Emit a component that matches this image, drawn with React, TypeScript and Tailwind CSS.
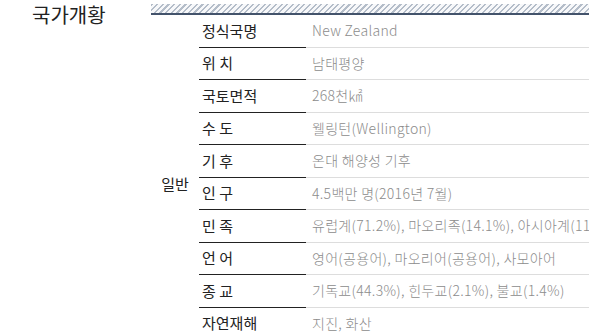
import React from "react";

const rows: { label: string; value: string }[] = [
  { label: "정식국명", value: "New Zealand" },
  { label: "위 치", value: "남태평양" },
  { label: "국토면적", value: "268천㎢" },
  { label: "수 도", value: "웰링턴(Wellington)" },
  { label: "기 후", value: "온대 해양성 기후" },
  { label: "인 구", value: "4.5백만 명(2016년 7월)" },
  { label: "민 족", value: "유럽계(71.2%), 마오리족(14.1%), 아시아계(11.3%), 태평양계(7.6%)" },
  { label: "언 어", value: "영어(공용어), 마오리어(공용어), 사모아어" },
  { label: "종 교", value: "기독교(44.3%), 힌두교(2.1%), 불교(1.4%)" },
  { label: "자연재해", value: "지진, 화산" },
];

const App: React.FC = () => {
  return (
    <div
      className="w-[589px] h-[335px] overflow-hidden bg-white flex"
      style={{ fontFamily: '"Noto Sans CJK KR", "Noto Sans", sans-serif' }}
    >
      <div className="w-[151px] shrink-0 pl-[32px] pt-[2px]">
        <h2 className="text-[20px] leading-[26px] text-[#222]">국가개황</h2>
      </div>

      <div className="flex-1 min-w-0 flex flex-col">
        <div className="shrink-0 mt-[4px] h-[11px] border-b-2 border-[#43536b] bg-[repeating-linear-gradient(135deg,#b4bdc9_0px,#b4bdc9_1.5px,#f7f8fa_1.5px,#f7f8fa_4px)]" />

        <div className="shrink-0 flex">
          <div className="w-[48px] shrink-0 flex items-center justify-center pt-[13px]">
            <span className="text-[15px] text-[#222]">일반</span>
          </div>
          <div className="flex-1 min-w-0">
            {rows.map((row) => (
              <div key={row.label} className="flex h-[32.5px]">
                <div className="w-[107px] shrink-0 border-b border-[#222] pl-[3px] flex items-center text-[15px] text-[#222] whitespace-nowrap">
                  {row.label}
                </div>
                <div className="flex-1 min-w-0 border-b border-[#ddd] pl-[6px] flex items-center text-[14px] font-light tracking-[0.3px] text-[#8c8c8c] whitespace-nowrap overflow-hidden">
                  {row.value}
                </div>
              </div>
            ))}
          </div>
        </div>
      </div>
    </div>
  );
};

export default App;
